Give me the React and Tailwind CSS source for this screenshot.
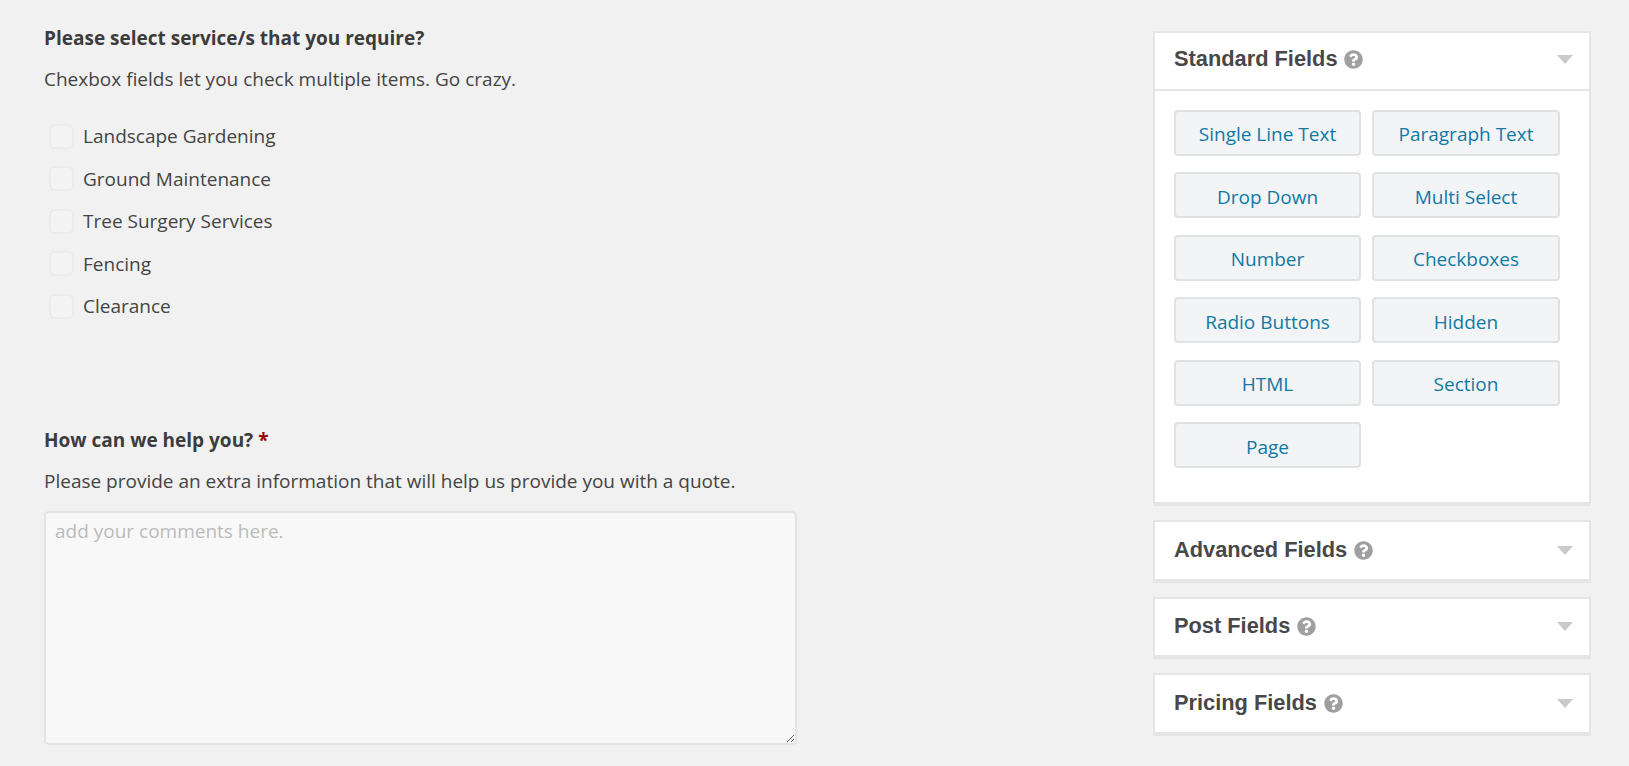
import React from 'react';
import { FaQuestionCircle } from 'react-icons/fa';

const services = ['Landscape Gardening', 'Ground Maintenance', 'Tree Surgery Services', 'Fencing', 'Clearance'];

const standardFields = [
  'Single Line Text',
  'Paragraph Text',
  'Drop Down',
  'Multi Select',
  'Number',
  'Checkboxes',
  'Radio Buttons',
  'Hidden',
  'HTML',
  'Section',
  'Page',
];

const PanelHeader = ({ title, open }) => (
  <div className={`flex items-center justify-between pl-[19px] pr-[16px] ${open ? 'h-[56px] pb-[4px]' : 'h-[56.5px] pb-0'}`}>
    <div className={`flex items-center ${open ? 'gap-[6px]' : 'gap-[7px]'}`}>
      <h3 className="font-['Liberation_Sans',sans-serif] text-[21.8px] font-bold text-[#484848]">{title}</h3>
      <FaQuestionCircle className="w-[19px] h-[19px] text-[#9f9f9f]" />
    </div>
    <svg width="16" height="9" viewBox="0 0 16 9">
      <polygon points="0,0 16,0 8,9" fill="#c9c9c9" />
    </svg>
  </div>
);

const App = () => {
  return (
    <div className="flex justify-between h-[766px] overflow-hidden bg-[#f1f1f1] font-['Open_Sans',sans-serif] text-[#444] pl-[44px] pr-[38px]">
      {/* Form preview */}
      <div className="w-[753px] pt-[26px]">
        <label className="block text-[19px] leading-[24px] font-bold text-[#3c3c3c]">Please select service/s that you require?</label>
        <p className="mt-[17px] text-[19px] leading-[24px]">Chexbox fields let you check multiple items. Go crazy.</p>

        <div className="mt-[24px] pl-[5px]">
          {services.map((name) => (
            <div key={name} className="flex items-center gap-[9px] h-[42.5px]">
              <span className="w-[25px] h-[25px] rounded-[6px] border-2 border-[#ebebeb] bg-[#f3f3f3]"></span>
              <span className="text-[19px] leading-[24px]">{name}</span>
            </div>
          ))}
        </div>

        <label className="block mt-[100px] text-[19px] leading-[24px] font-bold text-[#3c3c3c]">
          How can we help you? <span className="text-[#990000]">*</span>
        </label>
        <p className="mt-[17px] text-[19px] leading-[24px]">Please provide an extra information that will help us provide you with a quote.</p>

        <textarea
          readOnly
          placeholder="add your comments here."
          className="block mt-[18px] w-[753px] h-[234px] rounded-[5px] border-2 border-[#e3e3e3] bg-[#f8f8f8] px-[9px] py-[6px] text-[19px] leading-[24px] outline-none placeholder:text-[#bbb]"
        />
      </div>

      {/* Field sidebar */}
      <div className="w-[438px] pt-[31px] flex flex-col gap-[14px]">
        <div className="bg-white border-2 border-[#e5e5e5] border-b-[4px]">
          <PanelHeader title="Standard Fields" open />
          <div className="border-t-2 border-[#e5e5e5] px-[19px] pt-[18.5px] pb-[34px] grid grid-cols-[187px_188px] gap-x-[11px] gap-y-[16.5px]">
            {standardFields.map((name) => (
              <button key={name} className="h-[46px] pt-[4px] rounded-[4px] border-2 border-[#dfe1e3] bg-[#f3f4f5] text-[19px] text-[#0f79a5]">
                {name}
              </button>
            ))}
          </div>
        </div>

        {['Advanced Fields', 'Post Fields', 'Pricing Fields'].map((title) => (
          <div key={title} className="bg-white border-2 border-[#e5e5e5] border-b-[4px]">
            <PanelHeader title={title} />
          </div>
        ))}
      </div>
    </div>
  );
};

export default App;
